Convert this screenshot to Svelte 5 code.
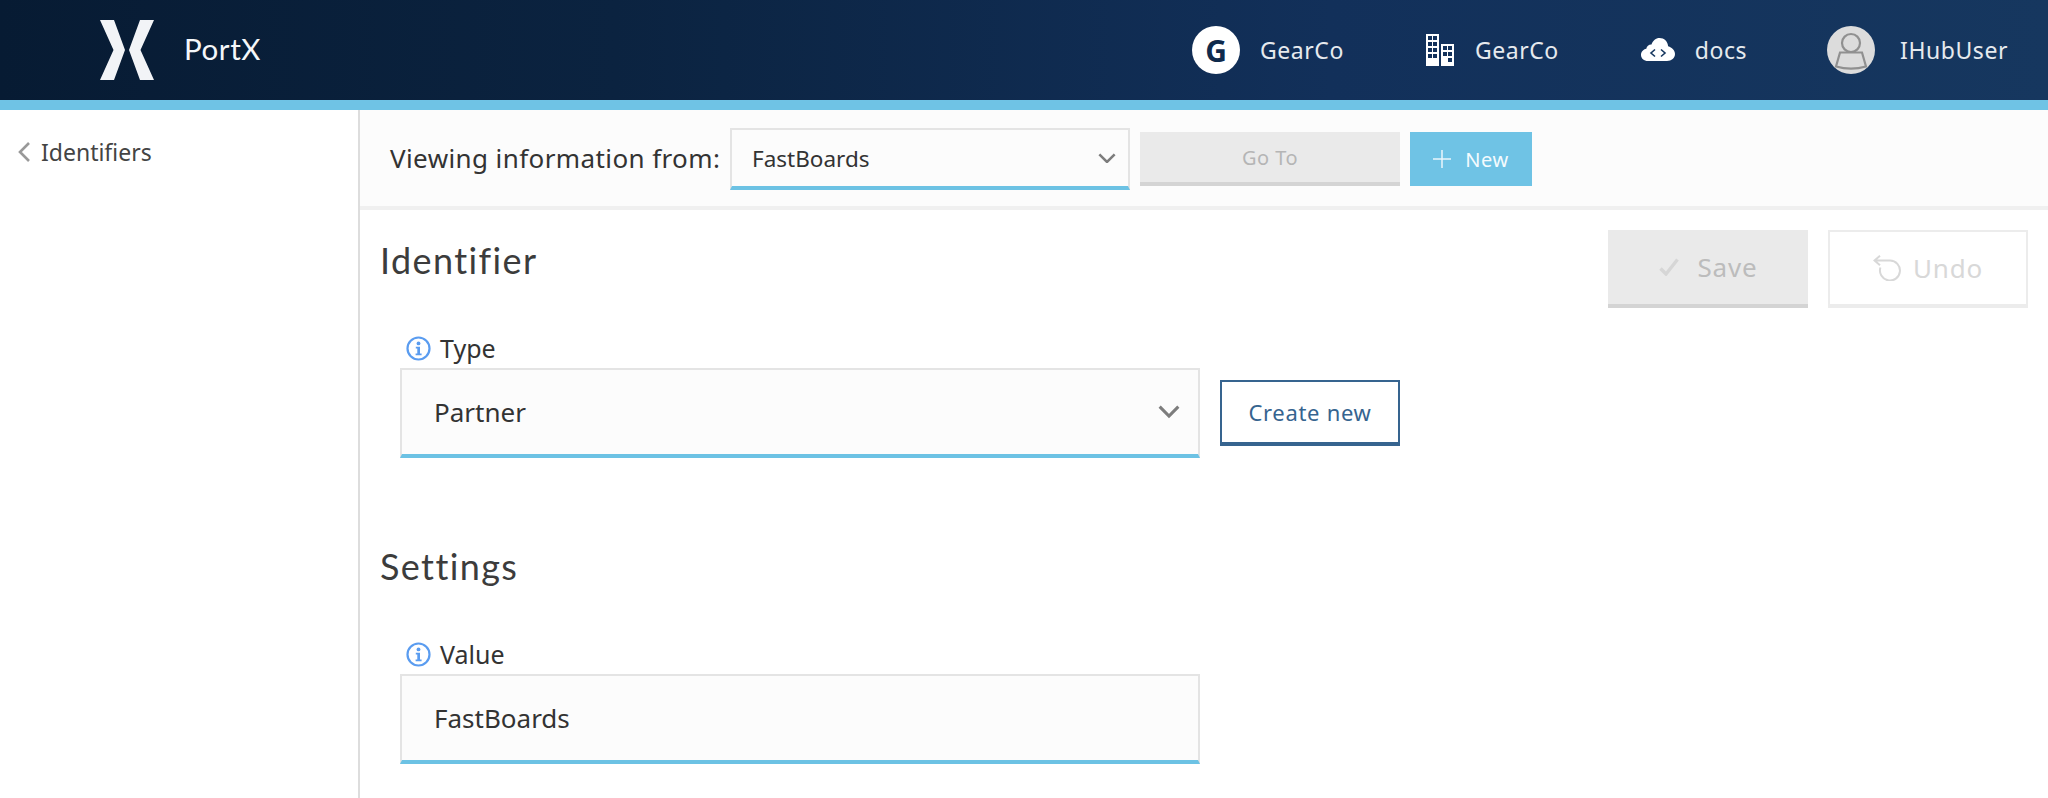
<script lang="ts">
  const headerItems = [
    { id: 'org', label: 'GearCo' },
    { id: 'tenant', label: 'GearCo' },
    { id: 'cloud', label: 'docs' },
    { id: 'user', label: 'IHubUser' },
  ]
</script>

{#snippet info()}
  <svg class="info" viewBox="0 0 25 25" width="25" height="25" aria-hidden="true">
    <circle cx="12.5" cy="12.5" r="11" fill="none" stroke="#5a9cf0" stroke-width="2.200" />
    <circle cx="12.5" cy="7.400" r="1.900" fill="#5a9cf0" />
    <path d="M9.800 10.800h4.200v6.800h1.600v1.600H9.600v-1.600h1.700v-5.200H9.800z" fill="#5a9cf0" />
  </svg>
{/snippet}

{#snippet chevron(size: number)}
  <svg class="chev" viewBox="0 0 20 12" width={size} height={size * 0.6} aria-hidden="true">
    <path d="M1.500 1.500 10 10l8.500-8.500" fill="none" stroke="#7d7d7d" stroke-width="2.800" />
  </svg>
{/snippet}

<div class="app">
  <header class="top">
    <div class="brand">
      <svg viewBox="0 0 54 60" width="54" height="60" aria-hidden="true">
        <path d="M0 0h14l11 30-11 30H0l13.500-30z M54 0H40L29 30l11 30h14L40.500 30z" fill="#f2f4f7" />
      </svg>
      <span class="name">PortX</span>
    </div>
    <nav class="items">
      {#each headerItems as item (item.id)}
        <div class="item {item.id}">
          {#if item.id === 'org'}
            <span class="badge">G</span>
          {:else if item.id === 'tenant'}
            <svg viewBox="0 0 28 32" width="28" height="32" aria-hidden="true">
              <path fill="#fff" fill-rule="evenodd" d="M0 0h13v32H0z M15 10h13v22H15z
                M2 2h4v4H2z M7 2h4v4H7z M2 8h4v4H2z M7 8h4v4H7z M2 14h4v4H2z M7 14h4v4H7z M2 20h4v4H2z M7 20h4v4H7z
                M17 12h4v4h-4z M22 12h4v4h-4z M17 18h4v4h-4z M22 18h4v4h-4z M22 24h4v4h-4z" />
            </svg>
          {:else if item.id === 'cloud'}
            <svg viewBox="0 0 34 24" width="34" height="24" aria-hidden="true">
              <path fill="#fff" d="M7 23C3 23 0 20.400 0 17 0 14 2.200 11.400 5.300 10.800 5.700 8.200 8 6.300 10.500 6.500 12 2.600 14.800 0 18.500 0c4.700 0 8.300 3.500 8.600 8.200C31 9.300 34 12.400 34 16c0 4-3.500 7-8 7z" />
              <path fill="none" stroke="#16375f" stroke-width="1.600" d="M14 11.500 10 15l4 3.500 M20 11.500l4 3.500-4 3.500" />
            </svg>
          {:else}
            <span class="avatar">
              <svg viewBox="0 0 48 48" width="48" height="48" aria-hidden="true">
                <circle cx="24" cy="17" r="9" fill="none" stroke="#909090" stroke-width="2.200" />
                <path d="M13 26.500h22l4 14c-9 2.600-21 2.600-30 0z" fill="none" stroke="#909090" stroke-width="2.200" />
              </svg>
            </span>
          {/if}
          <span class="label">{item.label}</span>
        </div>
      {/each}
    </nav>
  </header>

  <div class="body">
    <aside class="side">
      <svg viewBox="0 0 12 20" width="12" height="20" aria-hidden="true">
        <path d="M11 1 2 10l9 9" fill="none" stroke="#999" stroke-width="2.600" />
      </svg>
      <span>Identifiers</span>
    </aside>

    <main class="main">
      <div class="toolbar">
        <span class="viewing">Viewing information from:</span>
        <div class="select small">
          <span>FastBoards</span>
          {@render chevron(18)}
        </div>
        <button class="btn goto" disabled>Go To</button>
        <button class="btn new">
          <svg viewBox="0 0 18 18" width="18" height="18" aria-hidden="true">
            <path d="M9 0v18M0 9h18" stroke="#eaf6fb" stroke-width="1.500" />
          </svg>
          New
        </button>
      </div>

      <div class="content">
        <div class="head">
          <h2>Identifier</h2>
          <div class="actions">
            <button class="action save" disabled>
              <svg viewBox="0 0 20 18" width="20" height="18" aria-hidden="true">
                <path d="M1.500 10.500 7 16 18.500 1.500" fill="none" stroke="#d6d6d6" stroke-width="3.400" />
              </svg>
              Save
            </button>
            <button class="action undo" disabled>
              <svg viewBox="0 0 28 26" width="28" height="26" aria-hidden="true">
                <path d="M7 .8 1.500 5.500 7 10.200 M1.500 5.500H17a10 10 0 1 1-9.600 7" fill="none" stroke="#d8d8d8" stroke-width="2" />
              </svg>
              Undo
            </button>
          </div>
        </div>

        <div class="field first">
          <div class="caption">{@render info()}<span>Type</span></div>
          <div class="row">
            <div class="select large">
              <span>Partner</span>
              {@render chevron(22)}
            </div>
            <button class="create">Create new</button>
          </div>
        </div>

        <h2 class="settings">Settings</h2>

        <div class="field second">
          <div class="caption">{@render info()}<span>Value</span></div>
          <div class="select large"><span>FastBoards</span></div>
        </div>
      </div>
    </main>
  </div>
</div>

<style>
  :global(body) { margin: 0; background: #fff; }
  .app { height: 798px; overflow: hidden; display: flex; flex-direction: column; font-family: "Noto Sans", "Open Sans", sans-serif; color: #333; }

  .top { height: 100px; flex: none; display: flex; align-items: center; justify-content: space-between; border-bottom: 10px solid #6fc3e5; background: linear-gradient(90deg, #071b33 0%, #0b2340 30%, #12305a 65%, #16375f 100%); }
  .brand { display: flex; align-items: center; margin-left: 100px; gap: 30px; }
  .name { color: #f5f7fa; font-size: 29.5px; font-family: Lato, sans-serif; letter-spacing: .6px; margin-top: -3px; }
  .items { display: flex; align-items: center; }
  .item { display: flex; align-items: center; color: #e6eaee; }
  .label { font-size: 23px; letter-spacing: .55px; }
  .org { margin-right: 82px; gap: 20px; }
  .tenant { margin-right: 82px; gap: 21px; }
  .cloud { margin-right: 80px; gap: 20px; }
  .user { margin-right: 40px; gap: 25px; }
  .badge { width: 48px; height: 48px; border-radius: 50%; background: #fff; color: #0f2a4c; font-weight: 700; font-size: 30px; display: flex; align-items: center; justify-content: center; }
  .avatar { width: 48px; height: 48px; border-radius: 50%; background: #dcdcdc; display: block; }
  .avatar svg { display: block; }

  .body { flex: 1; display: flex; min-height: 0; }
  .side { width: 340px; flex: none; border-right: 2px solid #ddd; padding: 26px 0 0 18px; display: flex; align-items: flex-start; gap: 11px; font-size: 23px; line-height: 32px; color: #444; }
  .side svg { margin-top: 6px; }

  .main { flex: 1; min-width: 0; }
  .toolbar { height: 94px; padding: 2px 0 0 30px; border-bottom: 4px solid #f0f0f0; background: #fcfcfc; display: flex; align-items: center; }
  .viewing { font-size: 26px; letter-spacing: .4px; width: 340px; flex: none; white-space: nowrap; margin-top: -2px; }

  .select { box-sizing: border-box; display: flex; align-items: center; justify-content: space-between; border: 2px solid #e4e4e4; border-bottom: 4px solid #6cc2e4; background: #fcfcfc; }
  .select.small { width: 400px; height: 62px; padding: 0 12px 0 20px; font-size: 22.5px; }
  .select.large { width: 800px; height: 90px; padding: 0 18px 0 32px; font-size: 26px; }

  .btn { height: 54px; box-sizing: border-box; border: 0; font: inherit; font-size: 20px; letter-spacing: .5px; }
  .goto { width: 260px; margin-left: 10px; background: #eaeaea; border-bottom: 4px solid #d4d4d4; color: #b5b5b5; }
  .new { width: 122px; margin-left: 10px; background: #6fc3e5; color: #f4fbfe; display: flex; align-items: center; justify-content: center; gap: 14px; }

  .content { padding: 20px 20px 0 21px; }
  .head { display: flex; justify-content: space-between; align-items: flex-start; height: 78px; }
  .head h2 { margin-top: 5px; }
  h2 { margin: 0 0 0 -1px; font-family: Lato, sans-serif; font-weight: 400; font-size: 36px; line-height: 50px; color: #3c3c3c; letter-spacing: 1.4px; }
  .actions { display: flex; gap: 20px; }
  .action { width: 200px; height: 78px; box-sizing: border-box; font: inherit; font-size: 26px; letter-spacing: .8px; display: flex; align-items: center; justify-content: center; gap: 12px; }
  .save { background: #eaeaea; border: 0; border-bottom: 4px solid #d4d4d4; color: #bcbcbc; gap: 19px; }
  .undo { background: #fff; border: 2px solid #ececec; border-bottom-width: 4px; color: #d8d8d8; }

  .field { margin-left: 19px; }
  .first { margin-top: 27px; }
  .second { margin-top: 50px; }
  .caption { display: flex; align-items: center; gap: 9px; height: 26px; margin: 0 0 7px 6px; font-size: 25px; }
  .info { flex: none; }
  .row { display: flex; align-items: flex-start; gap: 20px; }
  .create { width: 180px; height: 66px; margin-top: 12px; box-sizing: border-box; background: #fff; border: 2px solid #36648f; border-bottom-width: 4px; color: #36648f; font: inherit; font-size: 22px; letter-spacing: .7px; }
  .settings { margin-top: 83px; }
</style>
